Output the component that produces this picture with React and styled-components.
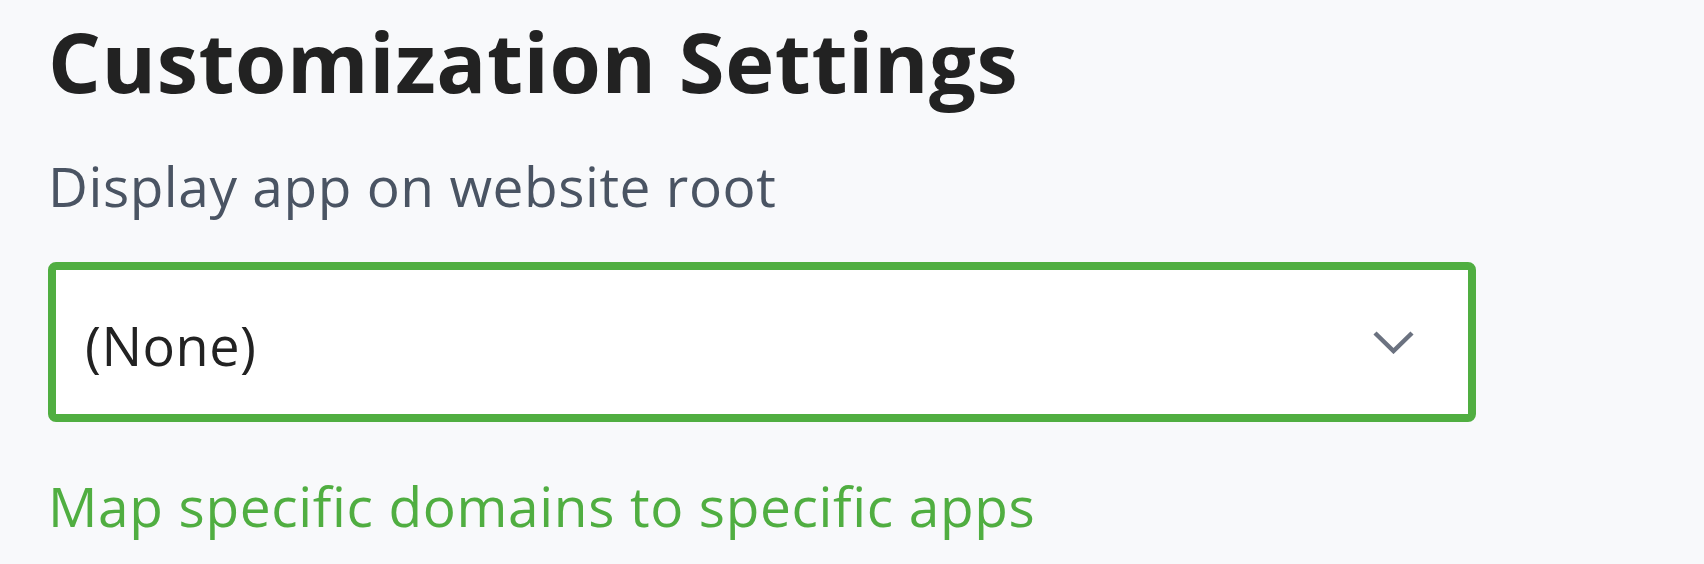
import React from "react";
import styled, { createGlobalStyle } from "styled-components";

const GlobalStyle = createGlobalStyle`
  html, body {
    margin: 0;
    padding: 0;
    background: #f8f9fb;
  }
  body {
    font-family: "Open Sans", "Noto Sans", "Liberation Sans", sans-serif;
  }
`;

const Page = styled.div`
  display: flex;
  flex-direction: column;
  align-items: flex-start;
  padding: 11px 48px 0 48px;
  min-height: 564px;
  box-sizing: border-box;
`;

const Title = styled.h1`
  margin: 0;
  font-size: 83px;
  line-height: 1.2;
  font-weight: 700;
  letter-spacing: 0.6px;
  color: #222222;
`;

const Label = styled.label`
  display: block;
  margin-top: 39px;
  font-size: 55px;
  line-height: 1.3;
  font-weight: 400;
  letter-spacing: 0.55px;
  color: #4a5463;
`;

const SelectBox = styled.div`
  margin-top: 41px;
  width: 1428px;
  height: 160px;
  box-sizing: border-box;
  border: 8px solid #50ae41;
  border-radius: 8px;
  background: #ffffff;
  display: flex;
  align-items: center;
  justify-content: space-between;
  padding: 6px 53px 0 29px;
`;

const SelectValue = styled.span`
  font-size: 54px;
  line-height: 1.3;
  letter-spacing: 0.5px;
  color: #222222;
`;

const Chevron = styled.svg`
  width: 43px;
  height: 24px;
  margin-top: -6px;
  flex: none;
`;

const Link = styled.a`
  margin-top: 48px;
  font-size: 55px;
  line-height: 1.3;
  letter-spacing: 0.65px;
  color: #50ae41;
  text-decoration: none;
  cursor: pointer;
`;

export default function App() {
  return (
    <>
      <GlobalStyle />
      <Page>
        <Title>Customization Settings</Title>
        <Label>Display app on website root</Label>
        <SelectBox role="combobox">
          <SelectValue>(None)</SelectValue>
          <Chevron viewBox="0 0 43 24" fill="none">
            <polyline
              points="3,3 21.5,21 40,3"
              stroke="#6b7280"
              strokeWidth="4.5"
              strokeLinejoin="miter"
            />
          </Chevron>
        </SelectBox>
        <Link>Map specific domains to specific apps</Link>
      </Page>
    </>
  );
}
